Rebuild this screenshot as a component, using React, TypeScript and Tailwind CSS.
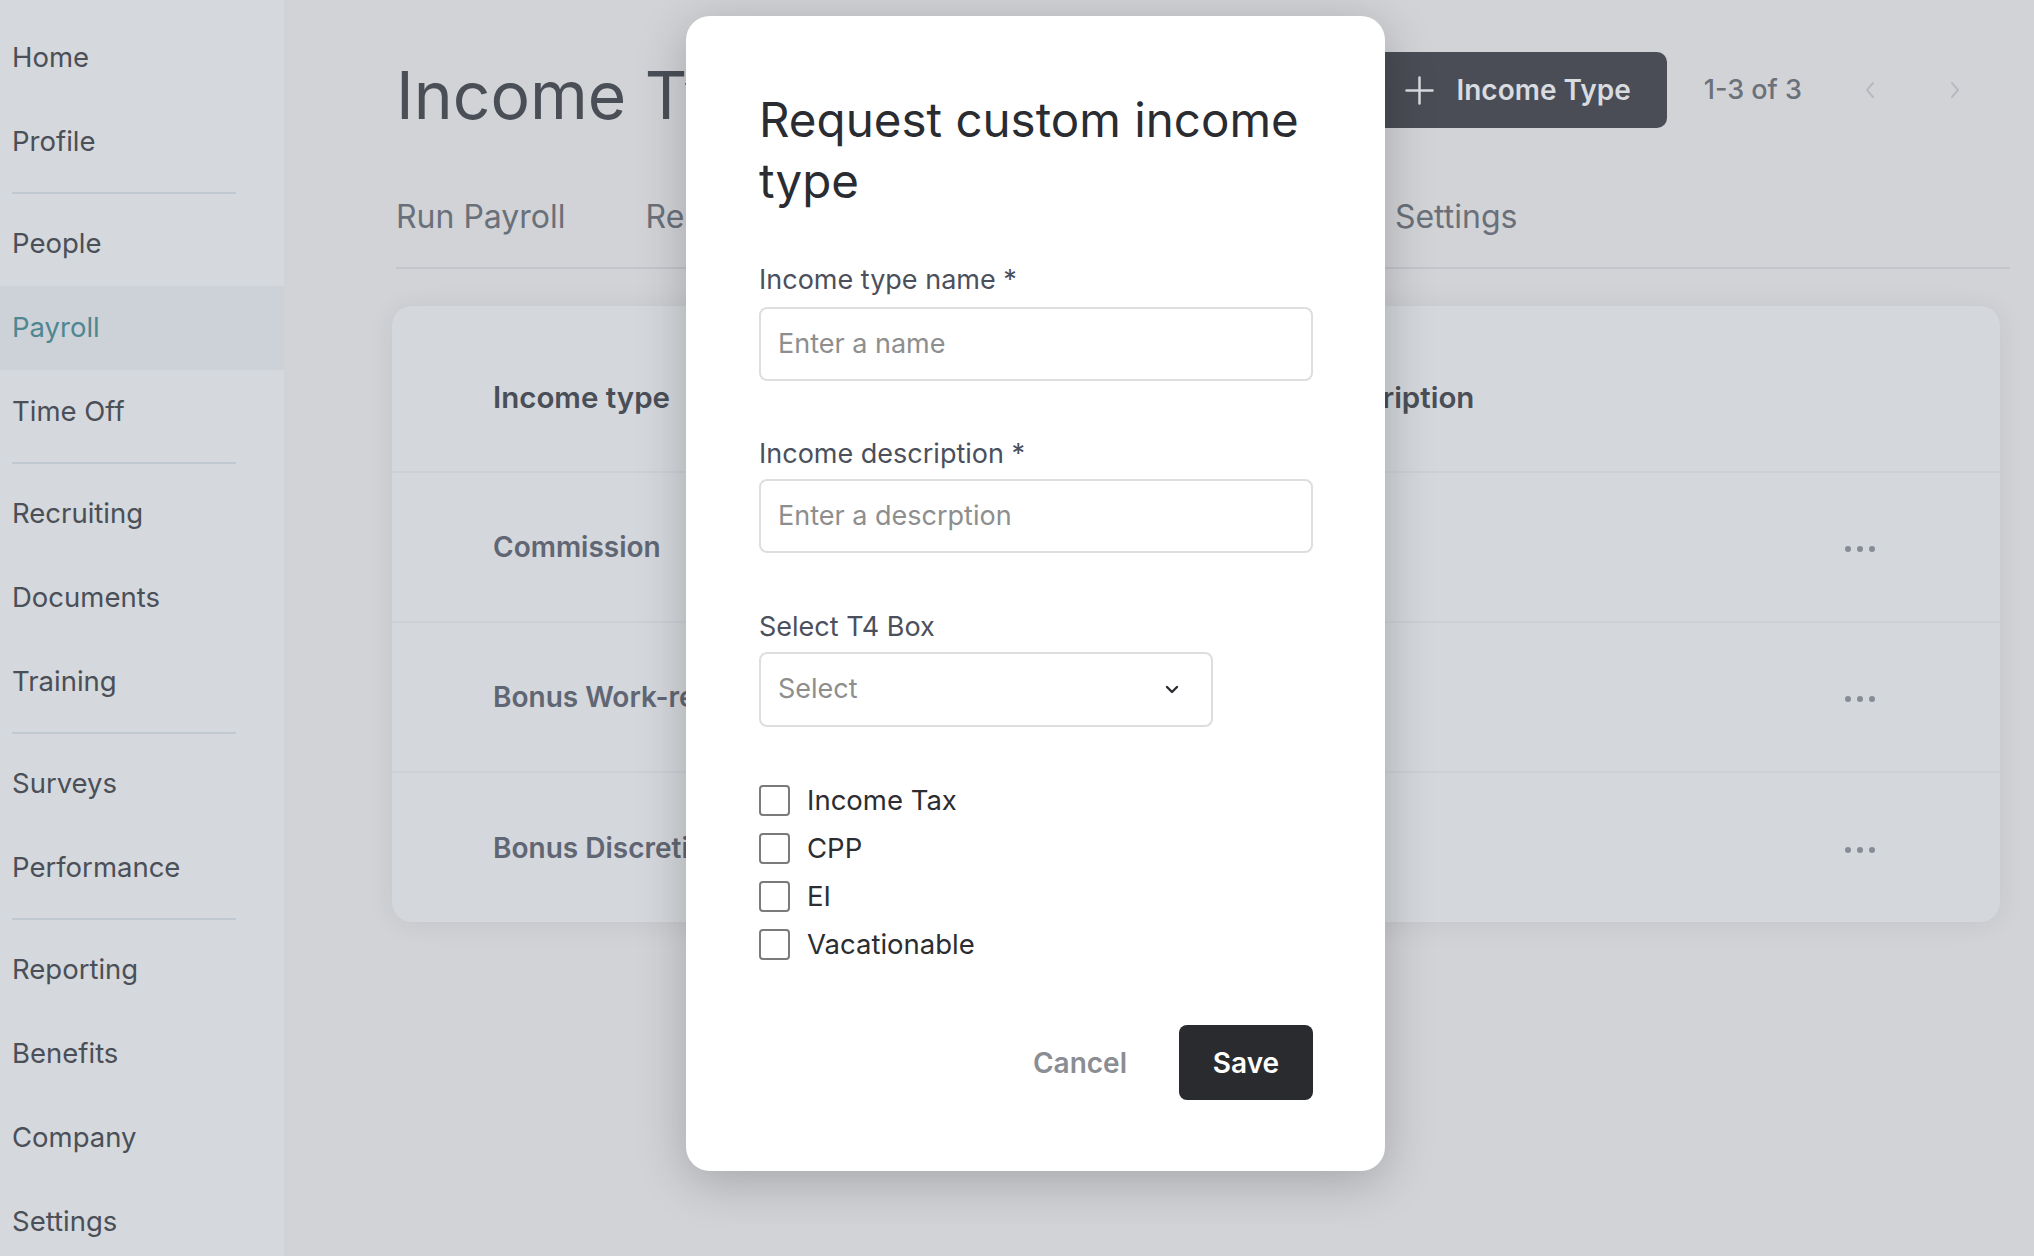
import React from "react";

const navGroups: string[][] = [
  ["Home", "Profile"],
  ["People", "Payroll", "Time Off"],
  ["Recruiting", "Documents", "Training"],
  ["Surveys", "Performance"],
  ["Reporting", "Benefits", "Company", "Settings"],
];

const tabs = ["Run Payroll", "Reports", "Income Types", "Deductions"];

const rows = ["Commission", "Bonus Work-related", "Bonus Discretionary"];

function Dots() {
  return (
    <div className="flex w-[40px] items-center justify-center gap-[6px] pt-[4px]">
      <span className="h-[6px] w-[6px] rounded-full bg-[#868c95]" />
      <span className="h-[6px] w-[6px] rounded-full bg-[#868c95]" />
      <span className="h-[6px] w-[6px] rounded-full bg-[#868c95]" />
    </div>
  );
}

function Checkbox({ label }: { label: string }) {
  return (
    <div className="flex h-[48px] items-center">
      <span className="h-[31px] w-[31px] rounded-[4px] border-2 border-[#7b7b7b] bg-white" />
      <span className="ml-[17px] text-[27.5px] leading-[28px] text-[#2b2d31]">{label}</span>
    </div>
  );
}

export default function App() {
  return (
    <div className="relative flex h-[1256px] w-[2034px] overflow-hidden bg-[#d2d3d7] font-['Inter',sans-serif]">
      <aside className="flex h-[1256px] w-[284px] shrink-0 flex-col overflow-hidden bg-[#d5d8dc] pt-[16px]">
        {navGroups.map((g, gi) => (
          <React.Fragment key={gi}>
            {gi > 0 && (
              <div className="flex h-[18px] shrink-0 items-center">
                <div className="ml-[12px] h-[2px] w-[224px] bg-[#c1c9d0]" />
              </div>
            )}
            {g.map((item) => (
              <div
                key={item}
                className={
                  item === "Payroll"
                    ? "flex h-[84px] shrink-0 items-center bg-[#cdd2d8] pl-[12px] text-[27.5px] text-[#4f8791]"
                    : "flex h-[84px] shrink-0 items-center pl-[12px] text-[27.5px] text-[#4a4f58]"
                }
              >
                {item}
              </div>
            ))}
          </React.Fragment>
        ))}
      </aside>

      <main className="flex min-w-0 flex-1 flex-col pl-[112px] pr-[24px]">
        <div className="flex items-start">
          <h1 className="mt-[62px] whitespace-nowrap text-[66px] font-normal leading-[66px] text-[#4a4e57]">
            Income Types
          </h1>
          <div className="ml-auto mr-[27px] mt-[52px] flex h-[76px] items-center">
            <button className="flex h-[76px] items-center gap-[22px] rounded-[10px] bg-[#4a4d55] pl-[36px] pr-[36px] text-[28px] font-semibold text-[#d8dbe0]">
              <svg width="29" height="29" viewBox="0 0 29 29" fill="none">
                <path d="M14.5 1.5V27.5M1.5 14.5H27.5" stroke="#d8dbe0" strokeWidth="2.5" strokeLinecap="round" />
              </svg>
              Income Type
            </button>
            <span className="ml-[37px] whitespace-nowrap text-[27px] font-medium text-[#6b7079]">1-3 of 3</span>
            <div className="ml-[39px] flex h-[56px] w-[56px] items-center justify-center">
              <svg width="11" height="18" viewBox="0 0 11 18" fill="none">
                <path d="M9 2L3 9L9 16" stroke="#b7bbc1" strokeWidth="2" strokeLinecap="round" strokeLinejoin="round" />
              </svg>
            </div>
            <div className="ml-[30px] flex h-[56px] w-[56px] items-center justify-center">
              <svg width="11" height="18" viewBox="0 0 11 18" fill="none">
                <path d="M2 2L8 9L2 16" stroke="#b7bbc1" strokeWidth="2" strokeLinecap="round" strokeLinejoin="round" />
              </svg>
            </div>
          </div>
        </div>

        <div className="mt-[73px] flex border-b-2 border-[#c3c5ca] text-[32px] leading-[32px] text-[#6a707a]">
          <div className="flex gap-[80px]">
            {tabs.map((t) => (
              <div key={t} className="whitespace-nowrap pb-[34px]">
                {t}
              </div>
            ))}
          </div>
          <div className="ml-[88px] whitespace-nowrap pb-[34px]">Settings</div>
        </div>

        <div className="-ml-[4px] mr-[10px] mt-[37px] rounded-[20px] bg-[#d4d7db] shadow-[0_2px_28px_rgba(0,0,0,0.07)]">
          <div className="flex h-[167px] items-center border-b-2 border-[#cdd0d5] pt-[18px] text-[29.5px] font-semibold text-[#4a4e57]">
            <div className="w-[918px] shrink-0 pl-[101px]">Income type</div>
            <div className="flex-1">Description</div>
          </div>
          {rows.map((r, i) => (
            <div
              key={r}
              className={
                i < rows.length - 1
                  ? "flex h-[150px] items-center border-b-2 border-[#cdd0d5] text-[28px] font-semibold text-[#606673]"
                  : "flex h-[149px] items-center text-[28px] font-semibold text-[#606673]"
              }
            >
              <div className="w-[918px] shrink-0 whitespace-nowrap pl-[101px]">{r}</div>
              <div className="flex-1" />
              <div className="mr-[120px]">
                <Dots />
              </div>
            </div>
          ))}
        </div>
      </main>

      <div className="absolute left-[686px] top-[16px] flex h-[1155px] w-[699px] flex-col rounded-[24px] bg-white pl-[73px] pr-[72px] pt-[73px] shadow-[0_10px_50px_rgba(0,0,0,0.22)]">
        <h2 className="text-[47.5px] font-normal leading-[61px] text-[#2a2c31]">
          Request custom income
          <br />
          type
        </h2>

        <label className="mt-[55px] text-[27px] leading-[28px] text-[#4b505c]">Income type name *</label>
        <div className="mt-[13px] flex h-[74px] items-center rounded-[8px] border-2 border-[#dedede] pl-[17px] text-[27px] text-[#8e8e8e]">
          Enter a name
        </div>

        <label className="mt-[59px] text-[27px] leading-[28px] text-[#4b505c]">Income description *</label>
        <div className="mt-[11px] flex h-[74px] items-center rounded-[8px] border-2 border-[#dedede] pl-[17px] text-[27px] text-[#8e8e8e]">
          Enter a descrption
        </div>

        <label className="mt-[60px] text-[27px] leading-[28px] text-[#4b505c]">Select T4 Box</label>
        <div className="mt-[11px] flex h-[75px] w-[454px] items-center justify-between rounded-[8px] border-2 border-[#dedede] pl-[17px] pr-[32px] text-[27px] text-[#8e8e8e]">
          <span>Select</span>
          <svg width="14" height="9" viewBox="0 0 14 9" fill="none">
            <path d="M2 2L7 7L12 2" stroke="#2a2c31" strokeWidth="2.4" strokeLinecap="round" strokeLinejoin="round" />
          </svg>
        </div>

        <div className="mt-[49px] flex flex-col">
          <Checkbox label="Income Tax" />
          <Checkbox label="CPP" />
          <Checkbox label="EI" />
          <Checkbox label="Vacationable" />
        </div>

        <div className="mt-[57px] flex items-center justify-end">
          <button className="mr-[52px] text-[28px] font-semibold text-[#8a8d93]">Cancel</button>
          <button className="flex h-[75px] w-[134px] items-center justify-center rounded-[8px] bg-[#2a2b2f] text-[28px] font-semibold text-white">
            Save
          </button>
        </div>
      </div>
    </div>
  );
}
